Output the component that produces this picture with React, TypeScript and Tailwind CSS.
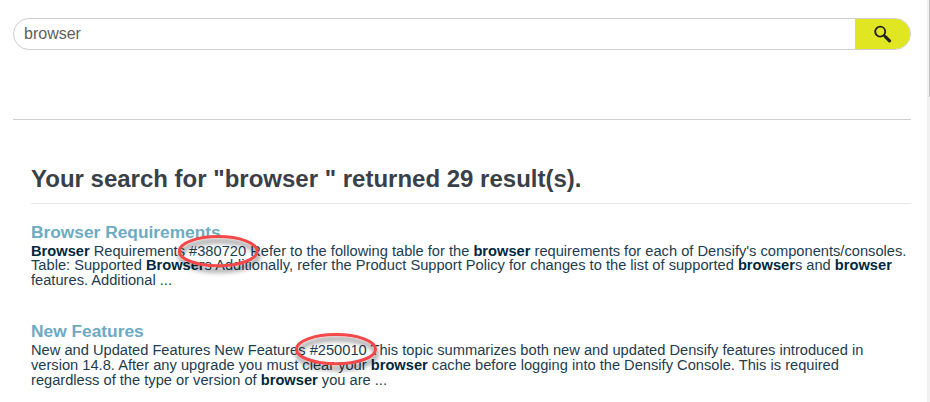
import type { ReactNode } from "react";

function Mark({ children }: { children: ReactNode }) {
  return <b className="font-bold text-[#00283c]">{children}</b>;
}

function Circled({ id, cx, cy, rx, children }: { id: string; cx: number; cy: number; rx: number; children: ReactNode }) {
  return (
    <span className="relative inline-block">
      {children}
      <svg className="absolute -left-[15px] -top-[13px] overflow-visible" width="90" height="44" viewBox="0 0 90 44" fill="none">
        <defs>
          <filter id={id} x="-20%" y="-30%" width="140%" height="170%">
            <feDropShadow dx="1" dy="4.5" stdDeviation="2.5" floodColor="#000" floodOpacity="0.55" />
          </filter>
        </defs>
        <ellipse cx={cx} cy={cy} rx={rx} ry="14.6" stroke="#f54848" strokeWidth="3" filter={`url(#${id})`} />
      </svg>
    </span>
  );
}

function Result({ title, children }: { title: string; children: ReactNode }) {
  return (
    <article className="h-[99px]">
      <h2 className="h-[21px] text-[17.33px] leading-[19px] font-bold text-[#6dabc3]">
        <span>{title}</span>
      </h2>
      {children}
    </article>
  );
}

export default function App() {
  return (
    <div className="flex h-[402px] w-[930px] overflow-hidden bg-white font-['Liberation_Sans',Arial,sans-serif]">
      <main className="w-[927px] pl-[13px] pr-4 pt-[18px]">
        <form className="flex h-8 overflow-hidden rounded-full border border-[#cfcfcf]">
          <div className="flex-1 pl-[10px] text-[16px] leading-[29px] text-[#606060]">browser</div>
          <button type="button" aria-label="Search" className="flex w-[55px] items-center justify-center bg-[#e0e622]">
            <svg width="18" height="18" viewBox="0 0 18 18" fill="none" stroke="#222" strokeLinecap="round">
              <circle cx="6.2" cy="6.6" r="5" strokeWidth="1.9" />
              <path d="M10 10.4 11.4 11.8" strokeWidth="2.2" />
              <path d="M11.5 11.8 15.5 15.9" strokeWidth="3.1" />
            </svg>
          </button>
        </form>
        <hr className="mt-[69px] border-[#cfcfcf]" />
        <section className="w-[898px] pl-[18px] pt-[42px]">
          <h1 className="h-[42px] border-b border-[#e8e8e8] text-[24px] leading-[34px] font-bold whitespace-nowrap text-[#3a4047]">
            <span>Your search for "browser " returned 29 result(s).</span>
          </h1>
          <div className="pt-[19px]">
            <Result title="Browser Requirements">
              <div className="flex flex-col items-start whitespace-nowrap text-[14.67px] leading-[15px] text-[#1d3c4e]">
                <span><Mark>Browser</Mark> Requirements <Circled id="shadow-1" cx={44.2} cy={20.2} rx={38.9}>#380720</Circled> Refer to the following table for the <Mark>browser</Mark> requirements for each of Densify's components/consoles.</span>
                <span className="-mt-px">Table: Supported <Mark>Browser</Mark>s Additionally, refer the Product Support Policy for changes to the list of supported <Mark>browser</Mark>s and <Mark>browser</Mark></span>
                <span>features. Additional ...</span>
              </div>
            </Result>
            <Result title="New Features">
              <div className="flex flex-col items-start whitespace-nowrap text-[14.67px] leading-[15px] text-[#1d3c4e]">
                <span>New and Updated Features New Features <Circled id="shadow-2" cx={41} cy={19.2} rx={39.5}>#250010</Circled> This topic summarizes both new and updated Densify features introduced in</span>
                <span>version 14.8. After any upgrade you must clear your <Mark>browser</Mark> cache before logging into the Densify Console. This is required</span>
                <span>regardless of the type or version of <Mark>browser</Mark> you are ...</span>
              </div>
            </Result>
          </div>
        </section>
      </main>
      <aside className="w-[3px] bg-[#f1f1f1]">
        <div className="ml-[2px] h-[97px] bg-[#c1c1c1]" />
      </aside>
    </div>
  );
}
